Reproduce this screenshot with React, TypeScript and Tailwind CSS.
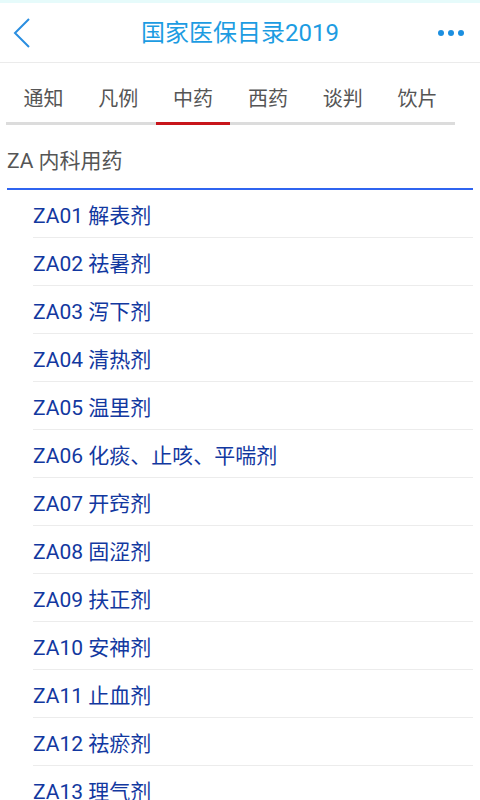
import { useState } from "react";

const tabs = ["通知", "凡例", "中药", "西药", "谈判", "饮片"];

const items = [
  "ZA01 解表剂",
  "ZA02 祛暑剂",
  "ZA03 泻下剂",
  "ZA04 清热剂",
  "ZA05 温里剂",
  "ZA06 化痰、止咳、平喘剂",
  "ZA07 开窍剂",
  "ZA08 固涩剂",
  "ZA09 扶正剂",
  "ZA10 安神剂",
  "ZA11 止血剂",
  "ZA12 祛瘀剂",
  "ZA13 理气剂",
];

export default function App() {
  const [active, setActive] = useState(2);

  return (
    <div
      className="w-[480px] h-[800px] overflow-hidden bg-white"
      style={{ fontFamily: 'Roboto, "Noto Sans CJK SC", sans-serif' }}
    >
      <div className="h-[3px] bg-[#e6fbfb]" />

      {/* 标题栏 */}
      <header className="grid grid-cols-[1fr_auto_1fr] items-center h-[60px] px-[13px] border-b border-[#ebebeb]">
        <svg width="18" height="30" viewBox="0 0 18 30">
          <path d="M16 1 L2 15 L16 29" fill="none" stroke="#2a8ee0" strokeWidth="2" />
        </svg>
        <h1 className="text-[24px] text-[#1c9ce2] leading-none">国家医保目录2019</h1>
        <div className="flex justify-end gap-[4px] pr-[3px]">
          <span className="w-[6px] h-[6px] rounded-full bg-[#1c8fe0]" />
          <span className="w-[6px] h-[6px] rounded-full bg-[#1c8fe0]" />
          <span className="w-[6px] h-[6px] rounded-full bg-[#1c8fe0]" />
        </div>
      </header>

      {/* 分类标签 */}
      <nav className="flex ml-[6px] w-[449px] border-b-[3px] border-[#dcdcdc]">
        {tabs.map((t, i) => (
          <button
            key={t}
            onClick={() => setActive(i)}
            className={`flex-1 h-[62px] pt-[12px] text-[20px] leading-[48px] text-[#555] -mb-[3px] border-b-[3px] ${
              i === active ? "border-[#c8151b]" : "border-transparent"
            }`}
          >
            {t}
          </button>
        ))}
      </nav>

      <div className="mx-[7px] mt-[20px] pb-[11px] text-[21px] text-[#555] leading-[32px] border-b-2 border-[#2f64f0]">
        ZA 内科用药
      </div>

      <ul className="ml-[33px] mr-[7px]">
        {items.map((it) => (
          <li
            key={it}
            className="h-[48px] pt-[6px] flex items-center text-[21px] text-[#1238a0] border-b border-[#ececec]"
          >
            {it}
          </li>
        ))}
      </ul>
    </div>
  );
}
